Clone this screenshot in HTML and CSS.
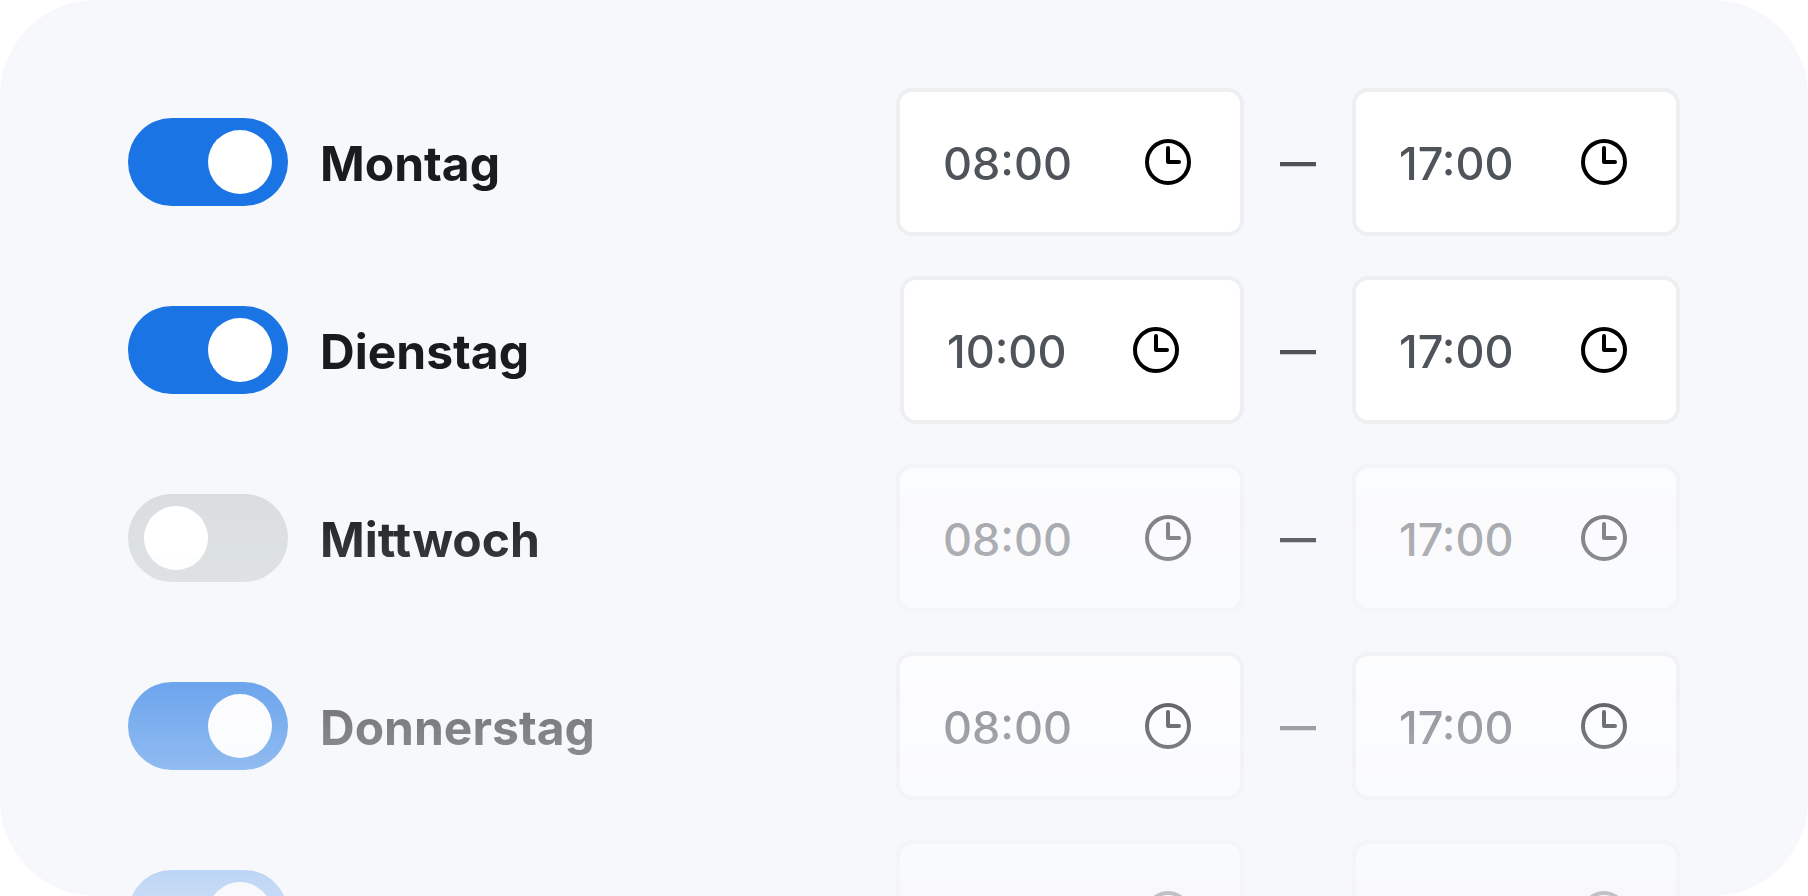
FILE: index.html
```html
<!DOCTYPE html>
<html lang="de">
<head>
<meta charset="utf-8">
<meta name="viewport" content="width=device-width, initial-scale=1">
<title>Öffnungszeiten</title>
<link rel="stylesheet" href="styles.css">
</head>
<body>
<svg class="sprite" aria-hidden="true">
  <symbol id="clock" viewBox="0 0 46 46">
    <circle cx="23" cy="23" r="21"/>
    <path d="M23 9v14h11"/>
  </symbol>
</svg>
<main class="card">
  <div class="days">
    <div class="day">
      <input class="switch" type="checkbox" id="mo" checked>
      <label class="name" for="mo">Montag</label>
      <div class="time"><input class="value" type="text" value="08:00" aria-label="Montag von"><svg class="icon"><use href="#clock"/></svg></div>
      <span class="dash">—</span>
      <div class="time time-end"><input class="value" type="text" value="17:00" aria-label="Montag bis"><svg class="icon"><use href="#clock"/></svg></div>
    </div>
    <div class="day">
      <input class="switch" type="checkbox" id="di" checked>
      <label class="name" for="di">Dienstag</label>
      <div class="time time-late"><input class="value" type="text" value="10:00" aria-label="Dienstag von"><svg class="icon"><use href="#clock"/></svg></div>
      <span class="dash">—</span>
      <div class="time time-end"><input class="value" type="text" value="17:00" aria-label="Dienstag bis"><svg class="icon"><use href="#clock"/></svg></div>
    </div>
    <div class="day">
      <input class="switch" type="checkbox" id="mi">
      <label class="name" for="mi">Mittwoch</label>
      <div class="time time-off"><input class="value" type="text" value="08:00" aria-label="Mittwoch von" disabled><svg class="icon"><use href="#clock"/></svg></div>
      <span class="dash">—</span>
      <div class="time time-end time-off"><input class="value" type="text" value="17:00" aria-label="Mittwoch bis" disabled><svg class="icon"><use href="#clock"/></svg></div>
    </div>
    <div class="day">
      <input class="switch" type="checkbox" id="do" checked>
      <label class="name" for="do">Donnerstag</label>
      <div class="time"><input class="value" type="text" value="08:00" aria-label="Donnerstag von"><svg class="icon"><use href="#clock"/></svg></div>
      <span class="dash">—</span>
      <div class="time time-end"><input class="value" type="text" value="17:00" aria-label="Donnerstag bis"><svg class="icon"><use href="#clock"/></svg></div>
    </div>
    <div class="day">
      <input class="switch" type="checkbox" id="fr" aria-label="Freitag" checked>
      <span class="name"></span>
      <div class="time"><input class="value" type="text" aria-label="Freitag von"><svg class="icon"><use href="#clock"/></svg></div>
      <span class="dash"></span>
      <div class="time time-end"><input class="value" type="text" aria-label="Freitag bis"><svg class="icon"><use href="#clock"/></svg></div>
    </div>
  </div>
</main>
</body>
</html>
```

FILE: styles.css
```css
* { box-sizing: border-box; }

body {
  margin: 0;
  background: #fff;
  font-family: Inter, "Liberation Sans", sans-serif;
}

.sprite { display: none; }

.card {
  height: 100vh;
  padding: 88px 128px 0;
  overflow: hidden;
  border-radius: 96px;
  background: #f7f8fc;
}

.days {
  display: flex;
  flex-direction: column;
  gap: 40px;
  -webkit-mask-image: linear-gradient(#000 45%, transparent 102%);
  mask-image: linear-gradient(#000 45%, transparent 102%);
}

.day {
  display: flex;
  align-items: center;
}

.switch {
  appearance: none;
  display: flex;
  flex: none;
  align-items: center;
  width: 160px;
  height: 88px;
  margin: 0;
  padding: 0 16px;
  border-radius: 44px;
  background: #d9dddf;
  cursor: pointer;
}

.switch::before {
  content: "";
  width: 64px;
  height: 64px;
  border-radius: 50%;
  background: #fff;
}

.switch:checked {
  justify-content: flex-end;
  background: #1a74e4;
}

.name {
  flex: 1;
  padding: 4px 0 0 32px;
  color: #1a1b1d;
  font-size: 48px;
  font-weight: 700;
  line-height: 56px;
}

.time {
  display: flex;
  flex: none;
  align-items: center;
  width: 348px;
  height: 148px;
  padding: 0 49px 0 43px;
  border: 4px solid #edeff1;
  border-radius: 16px;
  background: #fff;
}

.time-end { width: 328px; }

.time-late {
  width: 344px;
  padding-right: 61px;
}

.time-off { opacity: 0.5; }

.value {
  flex: 1;
  min-width: 0;
  padding: 4px 0 0;
  border: 0;
  background: none;
  color: #4f545b;
  font-family: inherit;
  font-size: 45px;
  font-weight: 500;
  line-height: 56px;
}

.icon {
  flex: none;
  width: 46px;
  height: 46px;
  fill: none;
  stroke: #000;
  stroke-width: 4;
  stroke-linecap: round;
  stroke-linejoin: round;
}

.dash {
  flex: none;
  width: 108px;
  color: #4f545b;
  font-size: 36px;
  font-weight: 700;
  line-height: 56px;
  text-align: center;
}
```
